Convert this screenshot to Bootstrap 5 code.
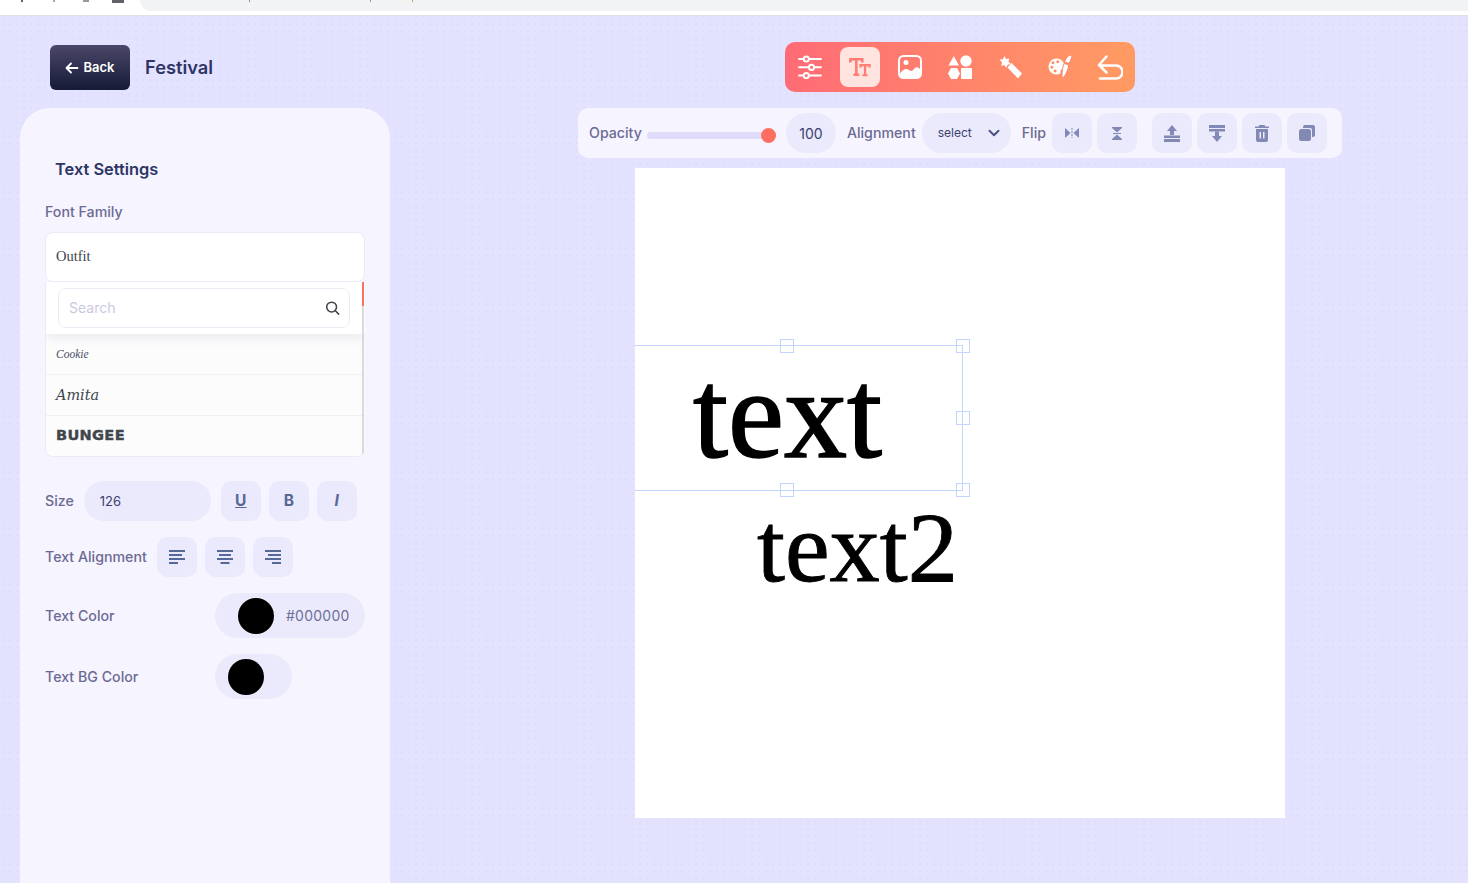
<!DOCTYPE html>
<html lang="en">
<head>
  <meta charset="UTF-8" />
  <meta name="viewport" content="width=device-width, initial-scale=1.0" />
  <title>Festival - Text Settings</title>
  <link href="https://cdn.jsdelivr.net/npm/bootstrap@5.3.0/dist/css/bootstrap.min.css" rel="stylesheet" />
  <style>
    html, body { height: 100%; overflow: hidden; }
    body {
      font-family: 'Inter', 'Liberation Sans', sans-serif;
      background-color: #e3e2ff;
      background-image: radial-gradient(#dddbf9 1px, transparent 1px);
      background-size: 7px 7px;
      color: #2b2f5e;
    }
    /* browser strip on top of the capture */
    .chrome-strip { height: 16px; background: #fff; border-bottom: 1px solid #dfe1e5; overflow: hidden; }
    .chrome-tabs { width: 128px; flex-shrink: 0; }
    .chrome-bit { display: block; height: 2px; background: #5f6368; flex-shrink: 0; }
    .chrome-pill { height: 11px; margin-left: 12px; background: #f1f3f4; border-radius: 0 0 0 14px; }

    .side-col { width: 390px; padding-left: 20px; flex-shrink: 0; }
    .back-row { height: 92px; padding-left: 30px; padding-top: 29px; }
    .back-btn {
      width: 80px; height: 45px; padding: 0; font-size: 13px; font-weight: 600; color: #fff;
      border: 0; border-radius: 6px; background: linear-gradient(180deg, #4b4769, #151a37);
    }
    .back-btn:hover { color: #fff; }
    .page-name { font-size: 18.3px; font-weight: 600; color: #2e3566; margin: 0 0 0 15px; line-height: 45px; }
    .side-panel { height: 775px; background: #f6f5ff; border-radius: 30px 30px 0 0; padding: 51px 25px 0; }
    .panel-title { font-size: 16.4px; font-weight: 600; color: #2e3566; margin: 0 0 23px 10px; line-height: 20px; }
    .field-label { font-size: 14.2px; font-weight: 500; color: #6b6a93; margin: 0; line-height: 20px; white-space: nowrap; flex-shrink: 0; }

    .font-picker { width: 320px; margin-top: 10px; height: 225px; }
    .font-current {
      height: 50px; background: #fff; border: 1px solid #ebebf5; border-radius: 8px; padding-left: 10px;
      font-family: 'Liberation Serif', serif; font-size: 14.5px; color: #3d4247; line-height: 47px;
    }
    .font-list {
      height: 175px; background: #fcfcfd; border: 1px solid #ebebf5; border-top: 0; border-right: 0; border-radius: 0 0 8px 8px;
      position: relative; overflow: hidden;
    }
    .font-scroll { position: absolute; right: 1px; top: 0; bottom: 0; width: 2.5px; background: #d9d9dc; z-index: 2; }
    .font-scroll::before { content: ""; display: block; height: 24px; background: #ff6f61; }
    .font-search { height: 52px; background: #fff; padding: 6px 15px 0 12px; box-shadow: 0 4px 10px rgba(60, 60, 110, .09); position: relative; }
    .search-box { height: 40px; border: 1px solid #ebebf5; border-radius: 8px; padding-left: 10px; padding-right: 9px; }
    .search-box input { font-size: 14px; border: 0; outline: 0; padding: 0 0 2px; width: 100%; background: transparent; color: #3d4247; }
    .search-box input::placeholder { color: #c9c9e0; }
    .font-opt { height: 41px; padding-left: 10px; border-bottom: 1px solid #f0f0f5; color: #40464c; display: flex; align-items: center; }
    .font-opt:last-child { border-bottom: 0; }
    .opt-cookie { font-family: 'Liberation Serif', serif; font-style: italic; font-size: 11.5px; color: #4a4d63; padding-top: 1px; }
    .opt-amita { font-family: 'DejaVu Serif', serif; font-style: italic; font-size: 14.4px; padding-top: 1px; }
    .opt-bungee { font-family: 'DejaVu Sans', sans-serif; font-weight: 700; font-size: 14.6px; letter-spacing: .3px; color: #3f464c; -webkit-text-stroke: .4px #3f464c; padding-bottom: 4px; }

    .pill-input {
      width: 127px; height: 40px; border: 0; border-radius: 20px; background: #eaeafc; font-size: 13px;
      color: #3c4170; padding: 0 0 0 16px; flex-shrink: 0;
    }
    .pill-input:focus { background: #eaeafc; box-shadow: none; color: #3c4170; }
    .tool-btn {
      width: 40px; height: 40px; padding: 0; border: 0; border-radius: 10px; background: #eaeafc; flex-shrink: 0;
      color: #566896; font-size: 15.5px; font-weight: 700; display: inline-flex; align-items: center; justify-content: center;
    }
    .tool-btn:hover { background: #eaeafc; color: #566896; }
    .row-size { margin-top: 24px; height: 40px; gap: 10px; }
    .btn-set { gap: 8px; }
    .row-align { margin-top: 16px; height: 40px; gap: 10px; }
    .row-color { margin-top: 16px; height: 45px; justify-content: space-between; }
    .row-bg { margin-top: 16px; height: 45px; justify-content: space-between; }
    .color-pill { height: 45px; border-radius: 23px; background: #eaeafc; display: flex; align-items: center; }
    .color-pill.with-hex { width: 150px; padding-left: 23px; }
    .color-pill.no-hex { width: 77px; padding-left: 13px; margin-right: 73px; }
    .color-dot { width: 36px; height: 36px; border-radius: 50%; background: #000; flex-shrink: 0; }
    .hex-text { font-size: 14px; color: #6f6e96; margin-left: 12px; letter-spacing: .25px; }

    .work-col { flex-grow: 1; margin-left: 62px; }
    .top-tools { padding-top: 26px; height: 92px; }
    .tool-strip { width: 350px; height: 50px; padding: 5px; gap: 10px; border-radius: 10px; background: linear-gradient(90deg, #ff6b75, #ff9b62); }
    .strip-btn { width: 40px; height: 40px; padding: 0; border: 0; border-radius: 8px; background: transparent; display: flex; align-items: center; justify-content: center; }
    .strip-btn.is-active { background: #ffe3df; }
    .option-bar { width: 764px; height: 50px; background: #f6f5ff; border-radius: 10px; padding: 5px 15px 5px 11px; }
    .opacity-range { width: 129px; height: 16px; margin: 4px 10px 0 5px; background: transparent; flex-shrink: 0; }
    .opacity-range::-webkit-slider-runnable-track { height: 7px; background: #e1dbfb; border-radius: 4px; }
    .opacity-range::-webkit-slider-thumb { width: 15px; height: 15px; margin-top: -4px; border-radius: 50%; background: #ff6f61; }
    .num-pill { width: 50px; height: 40px; border-radius: 20px; background: #eaeafc; font-size: 14px; color: #3c4170; padding: 0; text-align: center; border: 0; margin-right: 11px; flex-shrink: 0; }
    .num-pill:focus { background: #eaeafc; box-shadow: none; color: #3c4170; }
    .align-select {
      width: 89px; height: 40px; border: 0; border-radius: 20px; font-size: 12px; color: #3c4170; margin: 0 11px 0 6px; flex-shrink: 0;
      padding: 0 0 0 16px; background-color: #eaeafc; background-position: right 11px center; background-size: 12px;
      background-image: url("data:image/svg+xml,%3csvg xmlns='http://www.w3.org/2000/svg' viewBox='0 0 16 16'%3e%3cpath fill='none' stroke='%234c5080' stroke-linecap='round' stroke-linejoin='round' stroke-width='2.6' d='m2 5 6 6 6-6'/%3e%3c/svg%3e");
    }
    .flip-set { gap: 5px; margin-left: 6px; }
    .layer-set { gap: 5px; margin-left: 15px; }

    .canvas-stage { width: 650px; height: 650px; background: #fff; margin-top: 10px; position: relative; overflow: hidden; }
    .stage-text { position: absolute; font-family: 'Liberation Serif', serif; color: #000; line-height: 1; white-space: nowrap; }
    .text-one { font-size: 126px; left: 58px; top: 184px; -webkit-text-stroke: 1.6px #000; }
    .text-two { font-size: 100.5px; left: 122px; top: 329px; -webkit-text-stroke: .9px #000; }
    .select-box { position: absolute; left: -40px; top: 177px; width: 368px; height: 146px; border: 1.5px solid #c3d5fd; }
    .select-handle { position: absolute; width: 14px; height: 14px; border: 1.5px solid #c3d5fd; }
  </style>
</head>
<body>

<div class="chrome-strip d-flex">
  <div class="chrome-tabs d-flex">
    <span class="chrome-bit" style="width:2px;margin-left:21px"></span>
    <span class="chrome-bit" style="width:2px;margin-left:30px;background:#aaa"></span>
    <span class="chrome-bit" style="width:6px;margin-left:28px;background:#999"></span>
    <span class="chrome-bit" style="width:12px;height:3px;margin-left:23px"></span>
  </div>
  <div class="chrome-pill flex-grow-1 d-flex">
    <span class="chrome-bit" style="width:1px;margin-left:109px;background:#8a8d92"></span>
    <span class="chrome-bit" style="width:1px;margin-left:120px;background:#6aa5c8"></span>
    <span class="chrome-bit" style="width:1px;margin-left:41px;background:#c99a6a"></span>
  </div>
</div>

<div class="d-flex">
  <!-- left column -->
  <div class="side-col">
    <div class="back-row d-flex align-items-start">
      <button class="btn back-btn d-flex align-items-center justify-content-center gap-1">
        <svg width="14" height="12" viewBox="0 0 14 12" fill="none" stroke="#fff" stroke-width="1.8" stroke-linecap="round" stroke-linejoin="round"><path d="M12.5 6H2M6 1.5 1.5 6 6 10.500"/></svg>
        Back
      </button>
      <h1 class="page-name">Festival</h1>
    </div>

    <div class="side-panel">
      <h2 class="panel-title">Text Settings</h2>
      <p class="field-label">Font Family</p>

      <div class="font-picker">
        <div class="font-current">Outfit</div>
        <div class="font-list">
          <div class="font-scroll"></div>
          <div class="font-search">
            <div class="search-box d-flex align-items-center">
              <input type="text" placeholder="Search" />
              <svg width="16" height="16" viewBox="0 0 16 16" fill="none" stroke="#3d4247" stroke-width="1.6" stroke-linecap="round"><circle cx="7" cy="7" r="5.200"/><path d="m11 11 3.500 3.500"/></svg>
            </div>
          </div>
          <div class="font-opt opt-cookie">Cookie</div>
          <div class="font-opt opt-amita">Amita</div>
          <div class="font-opt opt-bungee">BUNGEE</div>
        </div>
      </div>

      <div class="d-flex align-items-center row-size">
        <span class="field-label">Size</span>
        <input class="form-control pill-input" value="126" />
        <div class="d-flex btn-set">
          <button class="btn tool-btn text-decoration-underline">U</button>
          <button class="btn tool-btn">B</button>
          <button class="btn tool-btn fst-italic">I</button>
        </div>
      </div>

      <div class="d-flex align-items-center row-align">
        <span class="field-label">Text Alignment</span>
        <div class="d-flex btn-set">
          <button class="btn tool-btn"><svg width="16" height="14" viewBox="0 0 16 14" stroke="#566896" stroke-width="2.100"><path d="M0 1h16M0 5h13M0 9h16M0 13h9"/></svg></button>
          <button class="btn tool-btn"><svg width="16" height="14" viewBox="0 0 16 14" stroke="#566896" stroke-width="2.100"><path d="M0 1h16M2 5h12M0 9h16M3.500 13h9"/></svg></button>
          <button class="btn tool-btn"><svg width="16" height="14" viewBox="0 0 16 14" stroke="#566896" stroke-width="2.100"><path d="M0 1h16M3 5h13M0 9h16M7 13h9"/></svg></button>
        </div>
      </div>

      <div class="d-flex align-items-center row-color">
        <span class="field-label">Text Color</span>
        <div class="color-pill with-hex">
          <span class="color-dot"></span>
          <span class="hex-text">#000000</span>
        </div>
      </div>

      <div class="d-flex align-items-center row-bg">
        <span class="field-label">Text BG Color</span>
        <div class="color-pill no-hex">
          <span class="color-dot"></span>
        </div>
      </div>
    </div>
  </div>

  <!-- work area -->
  <div class="work-col d-flex flex-column align-items-center">
    <div class="top-tools">
      <div class="tool-strip d-flex">
        <button class="strip-btn" aria-label="Adjust">
          <svg width="24" height="24" viewBox="0 0 24 24" fill="none" stroke="#fff" stroke-width="2" stroke-linecap="round"><path d="M1 4h4.500M11 4h12M1 12.300h10M16 12.300h7M1 20.600h4.500M11 20.600h12"/><circle cx="8.300" cy="4" r="2.600"/><circle cx="13.500" cy="12.300" r="2.600"/><circle cx="8.300" cy="20.600" r="2.600"/></svg>
        </button>
        <button class="strip-btn is-active" aria-label="Text">
          <svg width="22" height="22" viewBox="0 0 24 24" fill="none" stroke="#ff7d74" stroke-width="2.800"><path d="M1.500 7V3.500h13V7M8 3.500V20M4.800 20.500h6.400" /><path stroke-width="2.400" d="M12.500 12.500V10h10v2.500M17.500 10v11M14.800 21h5.400"/></svg>
        </button>
        <button class="strip-btn" aria-label="Image">
          <svg width="24" height="24" viewBox="0 0 24 24" fill="none"><rect x="1" y="1" width="22" height="22" rx="4.500" stroke="#fff" stroke-width="2"/><circle cx="8" cy="7.500" r="2.500" fill="#fff"/><path fill="#fff" d="M2 18.500c3-4 6-5.500 9-3.500 2.500 1.800 3.500 1 5.500-1.500 1.500-1.800 3.500-1.500 5.500.5V19.500a3 3 0 0 1-3 3h-14a3 3 0 0 1-3-3z"/></svg>
        </button>
        <button class="strip-btn" aria-label="Shapes">
          <svg width="24" height="24" viewBox="0 0 24 24" fill="#fff"><path d="M5.800 1 11 10.500H.5z"/><circle cx="18" cy="6" r="5.700"/><path d="M3 13h6l3 5.500-3 5.500H3L0 18.500z"/><rect x="13" y="13" width="11" height="11" rx="1"/></svg>
        </button>
        <button class="strip-btn" aria-label="Effects">
          <svg width="24" height="24" viewBox="0 0 24 24" fill="#fff"><path d="M6.500 1l1.500 3 3.300-.6-.8 3.300 2.300 2.400-3.300.6-1 3.100-2.200-2.500-3.300.5 1.200-3.100L1.500 4.600l3.400-.3z"/><path d="M9.500 12.500 13.500 8 24 18.500 20 23.500z"/></svg>
        </button>
        <button class="strip-btn" aria-label="Palette">
          <svg width="24" height="24" viewBox="0 0 24 24"><path fill="#fff" fill-rule="evenodd" d="M8.500 3.500a8 8 0 0 1 8 8c0 3-1.800 2.800-3 3-1.500.3-1 1.800-.8 2.700.2 1.300-1.500 2.300-4.200 2.300a8 8 0 0 1 0-16zM5 6.300a1.500 1.500 0 1 0 .1 0zM9.700 5.300a1.500 1.500 0 1 0 .1 0zM3.800 10.800a1.500 1.500 0 1 0 .1 0zM7 14.500a1.500 1.500 0 1 0 .1 0z"/><path fill="#fff" stroke="#ff8468" d="M20.500 1c1-1 3-.8 3.200.2.200 1.500-1.200 5-2.700 7.300l-4.500-1.700c1-2.500 2.500-4.500 4-5.800zM16.300 8.300l4.400 1.800c-.5 4.500-2.500 9.500-5.500 12.500-.8.500-1.500 0-1.300-1 .2-4.500.5-9.700 2.400-13.300z"/></svg>
        </button>
        <button class="strip-btn" aria-label="Undo">
          <svg width="26" height="26" viewBox="0 0 26 26" fill="none" stroke="#fff" stroke-width="2.500" stroke-linecap="round" stroke-linejoin="round"><path d="M9.500 2.500 2 11l7.500 7.500M2.500 11.500H19a6.500 6.500 0 0 1 0 13H3"/></svg>
        </button>
      </div>
    </div>

    <div class="option-bar d-flex align-items-center">
      <span class="field-label">Opacity</span>
      <input type="range" class="form-range opacity-range" min="0" max="100" value="100" />
      <input class="form-control num-pill" value="100" />
      <span class="field-label">Alignment</span>
      <select class="form-select align-select"><option>select</option></select>
      <span class="field-label">Flip</span>
      <div class="d-flex flip-set">
        <button class="btn tool-btn" aria-label="Flip horizontal"><svg width="14" height="10" viewBox="0 0 14 10" fill="#8189b4"><path d="M0 0l5.500 5L0 10zM14 0 8.500 5l5.500 5z"/><path d="M7 0v10" stroke="#8189b4" stroke-dasharray="2 1"/></svg></button>
        <button class="btn tool-btn" aria-label="Flip vertical"><svg width="10" height="13" viewBox="0 0 10 13" fill="#8189b4"><path d="M0 0h10v1L5 5.500 0 1zM0 13h10v-1L5 7.500 0 12z"/><path d="M1 6.500h8" stroke="#8189b4"/></svg></button>
      </div>
      <div class="d-flex layer-set">
        <button class="btn tool-btn" aria-label="Bring forward"><svg width="16" height="17" viewBox="0 0 16 17" fill="#8189b4"><path d="M8 0l5 6h-3v4H6V6H3z"/><path d="M0 10.500h16v2.500H0zM0 14h16v3H0z"/></svg></button>
        <button class="btn tool-btn" aria-label="Send backward"><svg width="16" height="17" viewBox="0 0 16 17" fill="#8189b4"><path d="M0 0h16v3H0zM0 4h16v2.500H0z"/><path d="M8 17l-5-6h3V6.500h4V11h3z"/></svg></button>
        <button class="btn tool-btn" aria-label="Delete"><svg width="14" height="17" viewBox="0 0 14 17" fill="#8189b4"><path d="M4.500 0h5l1 1.500H14V3H0V1.500h3.500z"/><path fill-rule="evenodd" d="M1 4h12v11a2 2 0 0 1-2 2H3a2 2 0 0 1-2-2zM4.500 7v6.500H6V7zM8 7v6.500h1.500V7z"/></svg></button>
        <button class="btn tool-btn" aria-label="Duplicate"><svg width="16" height="16" viewBox="0 0 16 16" fill="#8189b4"><path d="M6 0h8a2 2 0 0 1 2 2v8a2 2 0 0 1-2 2h-1V5a2 2 0 0 0-2-2H4V2a2 2 0 0 1 2-2z"/><rect y="4" width="12" height="12" rx="2.500"/></svg></button>
      </div>
    </div>

    <div class="canvas-stage">
      <div class="stage-text text-one">text</div>
      <div class="stage-text text-two">text2</div>
      <div class="select-box"></div>
      <span class="select-handle" style="left:145px;top:171px"></span>
      <span class="select-handle" style="left:321px;top:171px"></span>
      <span class="select-handle" style="left:321px;top:243px"></span>
      <span class="select-handle" style="left:145px;top:315px"></span>
      <span class="select-handle" style="left:321px;top:315px"></span>
    </div>
  </div>
</div>

<script src="https://cdn.jsdelivr.net/npm/bootstrap@5.3.0/dist/js/bootstrap.bundle.min.js"></script>
</body>
</html>
